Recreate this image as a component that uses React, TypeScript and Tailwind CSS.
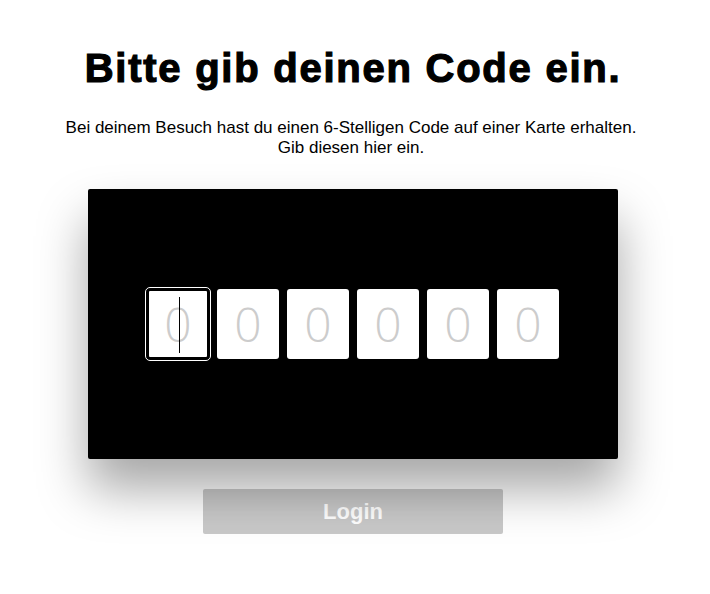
import React from 'react';

function App() {
  const digits = [0, 1, 2, 3, 4, 5];

  return (
    <div className="w-[710px] min-h-[594px] bg-white flex flex-col items-center pr-[4px] font-['Liberation_Sans',Arial,sans-serif] text-black">
      {/* Heading */}
      <h1 className="mt-[44px] text-[40px] leading-[48px] font-black tracking-[1.75px] [-webkit-text-stroke:1.2px_black]">
        Bitte gib deinen Code ein.
      </h1>

      {/* Subtitle */}
      <p className="mt-[26px] -ml-[4px] text-[17px] leading-[20px] text-center">
        Bei deinem Besuch hast du einen 6-Stelligen Code auf einer Karte erhalten.
        <br />
        Gib diesen hier ein.
      </p>

      {/* Code card */}
      <div className="relative mt-[31px] w-[530px] h-[270px] bg-black rounded-[2px] shadow-[0_30px_50px_rgba(0,0,0,0.35)] flex items-center justify-center">
        <div className="flex gap-[8px]">
          {digits.map((d) => (
            <div
              key={d}
              className={
                d === 0
                  ? 'relative w-[64px] h-[72px] -m-[1px] bg-white rounded-[4px] border-[3px] border-black outline outline-1 outline-white flex items-center justify-center'
                  : 'w-[62px] h-[70px] bg-white rounded-[3px] flex items-center justify-center'
              }
            >
              <span className="font-['Open_Sans',sans-serif] font-light text-[48px] leading-none text-[#cccccc]">0</span>
              {d === 0 && <span className="absolute left-[30px] top-[6px] w-[1px] h-[56px] bg-black" />}
            </div>
          ))}
        </div>
      </div>

      {/* Login */}
      <button className="mt-[30px] w-[300px] h-[45px] bg-[#c9c9c9] rounded-[2px] text-white text-[22px] leading-none font-bold">
        Login
      </button>
    </div>
  );
}

export default App;
